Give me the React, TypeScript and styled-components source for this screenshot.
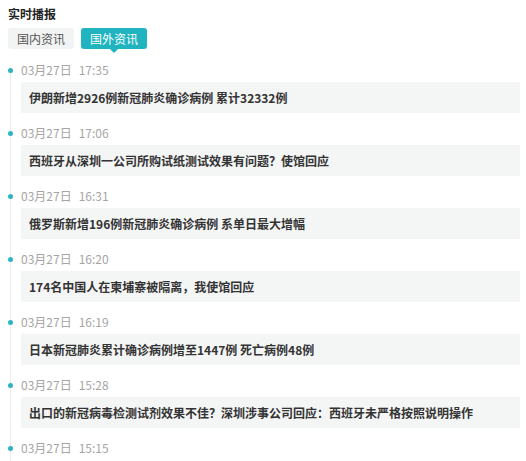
import React from 'react';
import styled, { createGlobalStyle } from 'styled-components';

const GlobalStyle = createGlobalStyle`
  body {
    margin: 0;
    background: #fff;
    font-family: "Microsoft YaHei", "Noto Sans CJK SC", "Liberation Sans", sans-serif;
  }
`;

const Panel = styled.div`
  width: 526px;
  padding: 6px 6px 0 8px;
  box-sizing: border-box;
  overflow: hidden;
  height: 461px;
`;

const Title = styled.h3`
  margin: 0;
  font-size: 12px;
  line-height: 16px;
  font-weight: bold;
  color: #222;
`;

const Tabs = styled.div`
  display: flex;
  gap: 7px;
  margin-top: 6px;
`;

const Tab = styled.div<{ $active?: boolean }>`
  position: relative;
  height: 21px;
  line-height: 21px;
  padding: 0 9px;
  font-size: 12px;
  border-radius: 3px;
  color: ${p => (p.$active ? '#fff' : '#555')};
  background: ${p => (p.$active ? '#1fb4bf' : '#f2f3f3')};
  &::after {
    content: '';
    display: ${p => (p.$active ? 'block' : 'none')};
    position: absolute;
    left: 50%;
    bottom: -4px;
    margin-left: -4px;
    border-left: 4px solid transparent;
    border-right: 4px solid transparent;
    border-top: 4px solid #1fb4bf;
  }
`;

const List = styled.ul`
  list-style: none;
  margin: 11px 0 0;
  padding: 0;
`;

const Item = styled.li`
  position: relative;
  padding-left: 13px;
  padding-bottom: 10px;
  &::before {
    content: '';
    position: absolute;
    left: 2px;
    top: 10px;
    bottom: -10px;
    width: 1px;
    background: #ececec;
  }
`;

const Dot = styled.span`
  position: absolute;
  left: 0;
  top: 8px;
  width: 5px;
  height: 5px;
  border-radius: 50%;
  background: #2bb5bf;
`;

const Time = styled.div`
  font-size: 12px;
  line-height: 20px;
  color: #a5a5a5;
  span {
    margin-left: 7px;
  }
`;

const Card = styled.div`
  margin-top: 2px;
  height: 31px;
  line-height: 31px;
  padding-left: 8px;
  background: #f4f5f5;
  font-size: 12px;
  font-weight: bold;
  color: #333;
  white-space: nowrap;
`;

const news = [
  { time: '17:35', title: '伊朗新增2926例新冠肺炎确诊病例 累计32332例' },
  { time: '17:06', title: '西班牙从深圳一公司所购试纸测试效果有问题？使馆回应' },
  { time: '16:31', title: '俄罗斯新增196例新冠肺炎确诊病例 系单日最大增幅' },
  { time: '16:20', title: '174名中国人在柬埔寨被隔离，我使馆回应' },
  { time: '16:19', title: '日本新冠肺炎累计确诊病例增至1447例 死亡病例48例' },
  { time: '15:28', title: '出口的新冠病毒检测试剂效果不佳？深圳涉事公司回应：西班牙未严格按照说明操作' },
  { time: '15:15', title: '' },
];

const App = () => (
  <Panel>
    <GlobalStyle />
    <Title>实时播报</Title>
    <Tabs>
      <Tab>国内资讯</Tab>
      <Tab $active>国外资讯</Tab>
    </Tabs>
    <List>
      {news.map((n, i) => (
        <Item key={i}>
          <Dot />
          <Time>03月27日<span>{n.time}</span></Time>
          {n.title && <Card>{n.title}</Card>}
        </Item>
      ))}
    </List>
  </Panel>
);

export default App;
